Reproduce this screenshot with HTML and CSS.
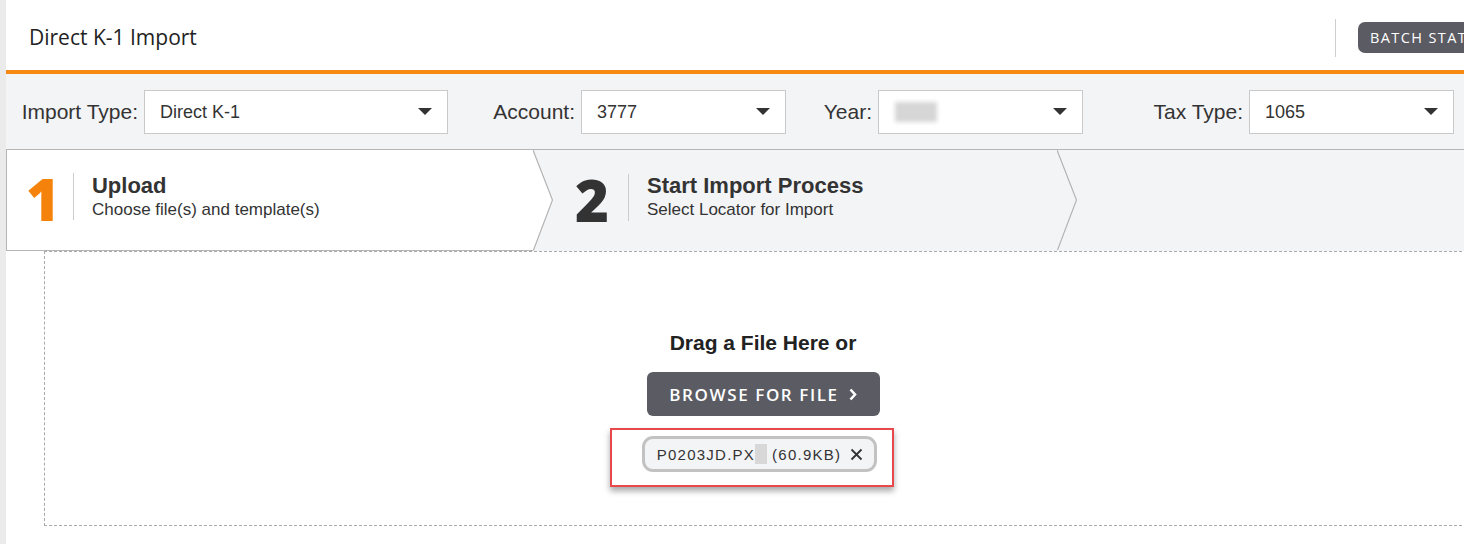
FILE: index.html
```html
<!DOCTYPE html>
<html lang="en">
<head>
<meta charset="utf-8">
<title>Direct K-1 Import</title>
<link rel="stylesheet" href="styles.css">
</head>
<body>
<div class="page">
  <div class="side-strip"></div>
  <main class="main">
    <header class="header">
      <h1 class="title">Direct K-1 Import</h1>
      <div class="header-actions">
        <span class="divider"></span>
        <button class="batch-btn">BATCH STATUS</button>
      </div>
    </header>

    <section class="filter-bar">
      <div class="filter">
        <label class="filter-label">Import Type:</label>
        <div class="select select-wide"><span class="select-value">Direct K-1</span><span class="caret"></span></div>
      </div>
      <div class="filter">
        <label class="filter-label">Account:</label>
        <div class="select"><span class="select-value">3777</span><span class="caret"></span></div>
      </div>
      <div class="filter">
        <label class="filter-label">Year:</label>
        <div class="select"><span class="select-value"><span class="blurred"></span></span><span class="caret"></span></div>
      </div>
      <div class="filter">
        <label class="filter-label">Tax Type:</label>
        <div class="select"><span class="select-value">1065</span><span class="caret"></span></div>
      </div>
    </section>

    <section class="steps">
      <div class="step step-active">
        <span class="step-num step-num-active">1</span>
        <span class="step-line"></span>
        <div class="step-text">
          <div class="step-title">Upload</div>
          <div class="step-sub">Choose file(s) and template(s)</div>
        </div>
      </div>
      <svg class="chev" width="20" height="101" viewBox="0 0 20 101">
        <polygon points="0,0 19,50 0,100 0,101 0,0" fill="#ffffff"/>
        <line x1="0" y1="100.5" x2="0.5" y2="100.5" stroke="#b5b5b5"/>
        <polyline points="0,0 19.5,50 0.5,100" fill="none" stroke="#b3b3b3" stroke-width="1.2"/>
      </svg>
      <div class="step step-next">
        <span class="step-num">2</span>
        <span class="step-line"></span>
        <div class="step-text">
          <div class="step-title">Start Import Process</div>
          <div class="step-sub">Select Locator for Import</div>
        </div>
      </div>
      <svg class="chev" width="20" height="101" viewBox="0 0 20 101">
        <polyline points="0,0 19.5,50 0.5,100" fill="none" stroke="#b3b3b3" stroke-width="1.2"/>
      </svg>
      <div class="step-rest"></div>
    </section>

    <section class="dropzone">
      <div class="drop-title">Drag a File Here or</div>
      <button class="browse-btn">BROWSE FOR FILE
        <svg class="browse-chev" width="8" height="13" viewBox="0 0 8 13"><polyline points="1.5,1.5 6,6.5 1.5,11.5" fill="none" stroke="#ffffff" stroke-width="2.6"/></svg>
      </button>
      <div class="highlight">
        <div class="file-chip">
          <span class="file-name">P0203JD.PX</span><span class="file-mask"></span><span class="file-size">(60.9KB)</span>
          <svg class="file-x" width="13" height="13" viewBox="0 0 13 13"><path d="M1.5 1.5 L11.5 11.5 M11.5 1.5 L1.5 11.5" stroke="#333" stroke-width="1.8" fill="none"/></svg>
        </div>
      </div>
    </section>
  </main>
</div>
</body>
</html>
```

FILE: styles.css
```css
* { box-sizing: border-box; }
html, body { margin: 0; padding: 0; background: #ffffff; }
body { overflow: hidden; width: 1464px; height: 544px; font-family: "Liberation Sans", Arial, sans-serif; color: #333; }

.page { display: flex; width: 1520px; min-height: 544px; }
.side-strip { width: 6px; flex-shrink: 0; background: #ebebeb; }
.main { width: 1514px; flex-shrink: 0; }

/* header */
.header { display: flex; align-items: center; height: 74px; border-bottom: 4px solid #f68a12; background: #fff; }
.title { flex: 1; margin: 3px 0 0 23px; font-family: "Open Sans", sans-serif; font-weight: 400; font-size: 21px; color: #222; }
.header-actions { width: 185px; display: flex; align-items: center; padding-top: 5px; }
.divider { width: 1px; height: 38px; background: #cfcfcf; }
.batch-btn { margin-left: 22px; height: 31px; padding: 0 12px; border: none; border-radius: 7px; background: #5b5b63; color: #fff; font-family: "Open Sans", sans-serif; font-size: 14.5px; font-weight: 500; letter-spacing: 1.4px; white-space: nowrap; }

/* filters */
.filter-bar { display: grid; grid-template-columns: 442px 338px 297px 371px; height: 75px; background: #f3f4f6; align-items: center; }
.filter { display: flex; align-items: center; justify-content: flex-end; }
.filter-label { font-size: 21px; color: #333; margin-right: 6px; }
.select { display: flex; align-items: center; justify-content: space-between; width: 205px; height: 44px; padding: 0 15px 0 15px; background: #fff; border: 1px solid #c9c9c9; }
.select-wide { width: 304px; }
.select-value { font-size: 18px; color: #333; display: flex; align-items: center; padding-top: 1px; }
.caret { width: 0; height: 0; border-left: 7px solid transparent; border-right: 7px solid transparent; border-top: 7px solid #333; }
.blurred { display: inline-block; width: 42px; height: 20px; background: #d6d6d6; filter: blur(2px); margin-left: 1px; }

/* steps */
.steps { display: flex; height: 102px; border-top: 1px solid #b5b5b5; background: #f3f4f6; }
.step { display: flex; align-items: center; height: 101px; padding-bottom: 7px; }
.step-active { width: 527px; background: #fff; border-left: 1px solid #b5b5b5; border-bottom: 1px solid #b5b5b5; padding-left: 19px; }
.step-next { width: 504px; padding-left: 22px; }
.chev { flex-shrink: 0; display: block; }
.step-rest { flex: 1; }
.step-num { font-family: "Open Sans", sans-serif; font-weight: 800; font-size: 58px; line-height: 1; color: #333; margin-right: 19px; margin-top: 5px; }
.step-num-active { color: #f5820a; margin-right: 13px; }
.step-line { width: 1px; height: 47px; background: #cccccc; margin-right: 18px; }
.step-text { margin-bottom: 1px; }
.step-title { font-size: 22px; font-weight: 700; color: #333; line-height: 27px; }
.step-sub { font-size: 17px; color: #333; line-height: 22px; }

/* dropzone */
.dropzone { margin: 0 38px; height: 275px; border: 1px dashed #a9a9a9; display: flex; flex-direction: column; align-items: center; padding-top: 78px; }
.drop-title { font-size: 21px; font-weight: 700; color: #222; line-height: 26px; }
.browse-btn { margin-top: 16px; width: 233px; height: 44px; border: none; border-radius: 6px; background: #5b5b63; color: #fff; font-family: "Open Sans", sans-serif; font-size: 17px; font-weight: 600; letter-spacing: 1.6px; display: flex; align-items: center; justify-content: center; gap: 10px; padding: 0 0 0 0; }
.browse-chev { display: block; }
.highlight { margin-top: 12px; margin-right: 22px; border: 2px solid #e8474b; padding: 6px 15px 13px 30px; box-shadow: 0 4px 6px rgba(0,0,0,0.35); }
.file-chip { display: flex; align-items: center; height: 36px; padding: 0 11px 0 12px; border: 3px solid #c2c2c2; border-radius: 11px; background: #f3f4f6; font-size: 15px; color: #333; letter-spacing: 1.25px; }
.file-mask { display: inline-block; width: 12px; height: 20px; background: #d8d8d8; margin-right: 5px; }
.file-x { margin-left: 9px; display: block; }
```
